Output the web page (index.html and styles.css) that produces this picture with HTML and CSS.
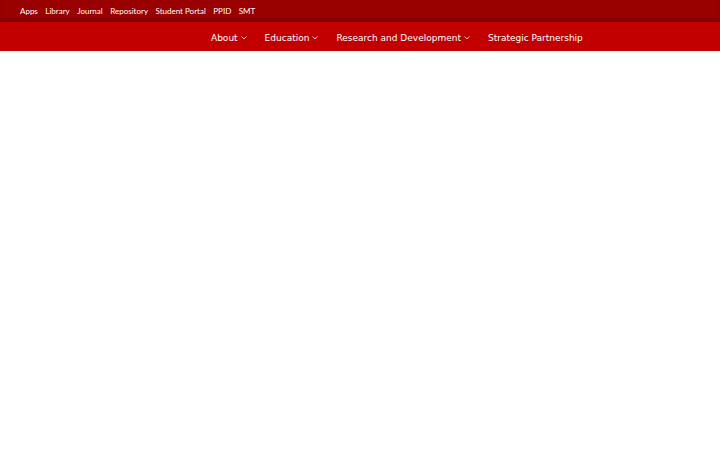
FILE: index.html
```html
<!DOCTYPE html>
<html lang="en">
<head>
    <meta charset="UTF-8">
    <meta name="viewport" content="width=device-width, initial-scale=1.0">
    <title>University</title>
    <link rel="stylesheet" href="styles.css">
</head>
<body>
    <div class="topbar">
        <a href="#">Apps</a>
        <a href="#">Library</a>
        <a href="#">Journal</a>
        <a href="#">Repository</a>
        <a href="#">Student Portal</a>
        <a href="#">PPID</a>
        <a href="#">SMT</a>
    </div>

    <nav class="mainnav">
        <a href="#" class="nav-item">About <svg class="chev" viewBox="0 0 6 4"><polyline points="0.5,0.5 3,3 5.5,0.5"/></svg></a>
        <a href="#" class="nav-item">Education <svg class="chev" viewBox="0 0 6 4"><polyline points="0.5,0.5 3,3 5.5,0.5"/></svg></a>
        <a href="#" class="nav-item">Research and Development <svg class="chev" viewBox="0 0 6 4"><polyline points="0.5,0.5 3,3 5.5,0.5"/></svg></a>
        <a href="#" class="nav-item">Strategic Partnership</a>
    </nav>
</body>
</html>
```

FILE: styles.css
```css
body {
    margin: 0;
    background-color: #ffffff;
    font-family: 'DejaVu Sans', sans-serif;
}
a {
    color: #fff;
    text-decoration: none;
}
.topbar {
    height: 22px;
    display: flex;
    align-items: center;
    gap: 7.5px;
    padding-left: 20px;
    background-color: #990000;
    font-family: 'Lato', sans-serif;
    font-size: 8px;
    box-shadow: inset 0 -3px 3px rgba(0, 0, 0, 0.12);
}
.mainnav {
    height: 27px;
    display: flex;
    align-items: center;
    gap: 18px;
    padding-left: 211px;
    padding-top: 2px;
    background-color: #c30000;
    font-size: 9px;
    box-shadow: 0 1px 4px rgba(0, 0, 0, 0.25);
}
.nav-item {
    display: flex;
    align-items: center;
    gap: 3px;
}
.chev {
    width: 6px;
    height: 4px;
    fill: none;
    stroke: #fff;
    stroke-width: 0.8;
}
```
